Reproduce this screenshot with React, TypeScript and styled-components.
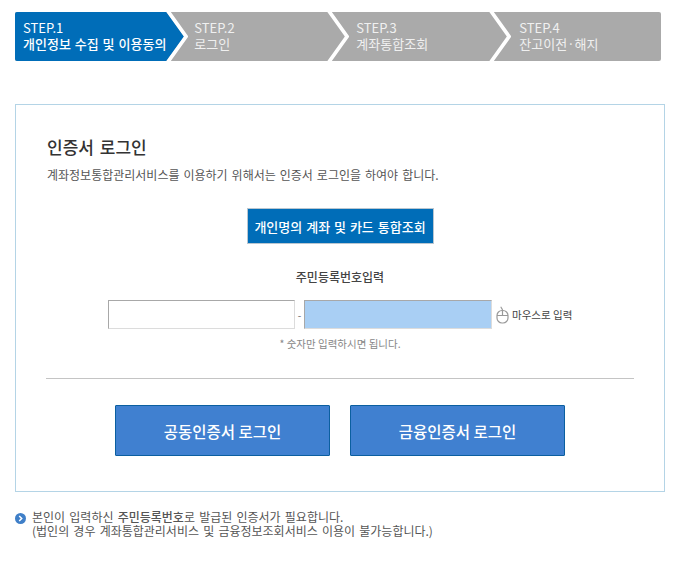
import { createGlobalStyle } from "styled-components";
import styled from "styled-components";

const GlobalStyle = createGlobalStyle`
    html, body {
        margin: 0;
        padding: 0;
        background: #fff;
        font-family: "Noto Sans CJK KR", "Noto Sans", sans-serif;
    }
`;

const Page = styled.div`
    width: 676px;
    height: 563px;
    padding: 12px 11px 0 15px;
    box-sizing: border-box;
    overflow: hidden;
`;

const StepBar = styled.ol`
    display: flex;
    width: 646px;
    height: 49px;
    margin: 0;
    padding: 0;
    list-style: none;
    background: #aaaaaa;
    border-radius: 2px;
    overflow: hidden;
`;

interface StepProps {
    $width: number;
    $indent: number;
    $active?: boolean;
    $last?: boolean;
}

const Step = styled.li<StepProps>`
    position: relative;
    flex: 0 0 ${(props) => props.$width}px;
    box-sizing: border-box;
    padding: 8px 0 0 ${(props) => props.$indent}px;
    color: ${(props) => (props.$active ? "#fff" : "#f0f0f0")};
    font-size: 13px;
    line-height: 16px;
    &::before {
        content: "";
        display: ${(props) => (props.$active ? "block" : "none")};
        position: absolute;
        inset: 0 -18px 0 0;
        background: #006db8;
        clip-path: polygon(0 0, calc(100% - 18px) 0, 100% 50%, calc(100% - 18px) 100%, 0 100%);
    }
    &::after {
        content: "";
        display: ${(props) => (props.$last ? "none" : "block")};
        position: absolute;
        top: 0;
        bottom: 0;
        right: -22px;
        width: 22px;
        background: #fff;
        clip-path: polygon(0 0, 4.5px 0, 22px 50%, 4.5px 100%, 0 100%, 17.5px 50%);
    }
`;

const StepText = styled.span`
    position: relative;
    z-index: 1;
    display: block;
    white-space: nowrap;
`;

const StepName = styled(StepText)<{ $active?: boolean }>`
    font-weight: ${(props) => (props.$active ? 500 : 400)};
    word-spacing: 1px;
`;

const Panel = styled.section`
    width: 650px;
    height: 388px;
    margin-top: 43px;
    padding: 29px 30px 0 30px;
    box-sizing: border-box;
    border: 1px solid #b4d4e6;
`;

const Title = styled.h2`
    margin: 0;
    padding-left: 1px;
    color: #333;
    font-size: 17px;
    font-weight: 500;
    line-height: 26px;
    word-spacing: 2px;
`;

const Description = styled.p`
    margin: 6px 0 0;
    padding-left: 1px;
    color: #555;
    font-size: 12px;
    line-height: 18px;
    word-spacing: 1.3px;
`;

const NameButton = styled.button`
    display: block;
    width: 187px;
    height: 36px;
    margin: 24px auto 0;
    padding: 0;
    border: 1px solid #b9c6d0;
    background: #006db8;
    color: #fff;
    font-family: inherit;
    font-size: 13px;
    font-weight: 500;
    word-spacing: 1px;
`;

const FieldLabel = styled.div`
    margin-top: 24px;
    color: #444;
    font-size: 12px;
    font-weight: 500;
    line-height: 18px;
    text-align: center;
`;

const FieldRow = styled.div`
    display: flex;
    align-items: center;
    height: 29px;
    margin: 14px 0 0 62px;
`;

const IdInput = styled.div<{ $masked?: boolean }>`
    width: ${(props) => (props.$masked ? 188 : 187)}px;
    height: 29px;
    box-sizing: border-box;
    border: 1px solid;
    border-color: #a8a8a8 #dcdcdc #dcdcdc #a8a8a8;
    background: ${(props) => (props.$masked ? "#a9cff4" : "#fff")};
`;

const Dash = styled.span`
    width: 9px;
    color: #666;
    font-size: 10px;
    text-align: center;
`;

const MouseHint = styled.span`
    display: flex;
    align-items: center;
    gap: 3px;
    margin-left: 4px;
    color: #444;
    font-size: 10.5px;
    white-space: nowrap;
`;

const Hint = styled.p`
    margin: 7px 0 0;
    color: #888;
    font-size: 10.5px;
    line-height: 16px;
    text-align: center;
`;

const Divider = styled.hr`
    height: 1px;
    margin: 26px 0 0;
    border: 0;
    background: #c4c4c4;
`;

const LoginRow = styled.div`
    display: flex;
    justify-content: center;
    gap: 20px;
    margin-top: 26px;
`;

const LoginButton = styled.button`
    width: 215px;
    height: 51px;
    padding: 0;
    border: 1px solid #0b5fa0;
    border-radius: 1px;
    background: #4080d0;
    color: #fff;
    font-family: inherit;
    font-size: 15.5px;
    font-weight: 500;
`;

const Notes = styled.div`
    display: flex;
    gap: 6px;
    margin-top: 18px;
    color: #555;
    font-size: 12px;
    line-height: 14px;
    word-spacing: 1.5px;
`;

const Strong = styled.span`
    font-weight: 500;
`;

const NoteIcon = styled.svg`
    flex: none;
    width: 11px;
    height: 11px;
    margin-top: 3px;
`;

function App() {
    return (
        <Page>
            <GlobalStyle />
            <StepBar>
                <Step $width={151} $indent={8} $active>
                    <StepText>STEP.1</StepText>
                    <StepName $active>개인정보 수집 및 이용동의</StepName>
                </Step>
                <Step $width={161} $indent={28}>
                    <StepText>STEP.2</StepText>
                    <StepName>로그인</StepName>
                </Step>
                <Step $width={162} $indent={29}>
                    <StepText>STEP.3</StepText>
                    <StepName>계좌통합조회</StepName>
                </Step>
                <Step $width={172} $indent={30} $last>
                    <StepText>STEP.4</StepText>
                    <StepName>잔고이전·해지</StepName>
                </Step>
            </StepBar>

            <Panel>
                <Title>인증서 로그인</Title>
                <Description>
                    계좌정보통합관리서비스를 이용하기 위해서는 인증서 로그인을 하여야 합니다.
                </Description>
                <NameButton>개인명의 계좌 및 카드 통합조회</NameButton>
                <FieldLabel>주민등록번호입력</FieldLabel>
                <FieldRow>
                    <IdInput />
                    <Dash>-</Dash>
                    <IdInput $masked />
                    <MouseHint>
                        <svg width="13" height="18" viewBox="0 0 13 18" fill="none" stroke="#999" strokeWidth="1.2">
                            <rect x="1" y="4.5" width="11" height="12.5" rx="5" />
                            <path d="M1 9.5h11M6.5 4.5V9.5M6.5 4.5C6.5 2.5 5 2.5 5 0.8" />
                        </svg>
                        마우스로 입력
                    </MouseHint>
                </FieldRow>
                <Hint>* 숫자만 입력하시면 됩니다.</Hint>
                <Divider />
                <LoginRow>
                    <LoginButton>공동인증서 로그인</LoginButton>
                    <LoginButton>금융인증서 로그인</LoginButton>
                </LoginRow>
            </Panel>

            <Notes>
                <NoteIcon viewBox="0 0 11 11">
                    <circle cx="5.5" cy="5.5" r="5.5" fill="#3f7fc8" />
                    <path d="M4.2 3l2.5 2.5L4.2 8" fill="none" stroke="#fff" strokeWidth="1.5" />
                </NoteIcon>
                <div>
                    본인이 입력하신 <Strong>주민등록번호</Strong>로 발급된 인증서가 필요합니다.
                    <br />
                    (법인의 경우 계좌통합관리서비스 및 금융정보조회서비스 이용이 불가능합니다.)
                </div>
            </Notes>
        </Page>
    );
}

export default App;
